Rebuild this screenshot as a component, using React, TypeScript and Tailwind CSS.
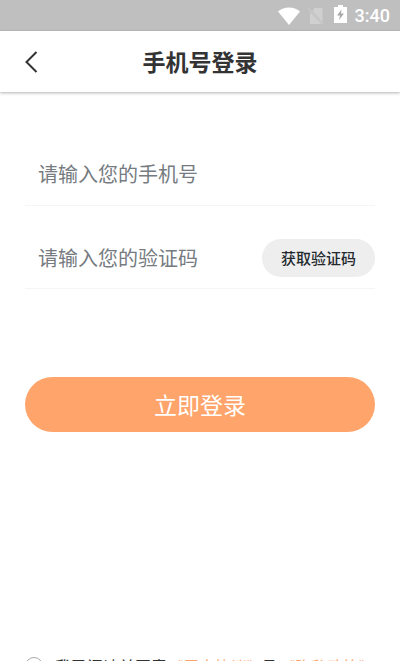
import { FC, useState } from "react";

const StatusBar: FC = () => {
    return (
        <div className="flex h-[31px] shrink-0 items-center justify-end bg-[#bfbfbf] pr-2.5 text-white">
            <svg className="h-[18px] w-[22px]" viewBox="0 0 22 18" fill="currentColor">
                <path d="M0 4.5C6-1 16-1 22 4.5L11 18Z" />
            </svg>
            <svg
                className="ml-2 h-[18px] w-4 text-[#d0d0d0]"
                viewBox="0 0 16 18"
                fill="currentColor"
            >
                <path d="M6.5 1H14.5V15L4.5 4Z" />
                <path d="M2 5L13.500 17H2Z" />
                <path d="M0.500 1.500L15 17" stroke="currentColor" strokeWidth="1" />
            </svg>
            <svg className="mb-1 ml-2.5 h-5 w-[13px]" viewBox="0 0 13 20" fill="currentColor">
                <path d="M4 1H9V3H13V19H0V3H4Z" />
                <path d="M7.500 5.500L3 11.500H6L5 16L10 9.500H7Z" fill="#a8a8a8" />
            </svg>
            <span className="ml-2 font-['Roboto',sans-serif] text-lg leading-6 font-medium">3:40</span>
        </div>
    );
};

const Login: FC = () => {
    const [phone, setPhone] = useState("");
    const [code, setCode] = useState("");

    return (
        <div className="flex h-screen flex-col overflow-hidden bg-white font-['Noto_Sans_CJK_SC',sans-serif] text-[#333]">
            <StatusBar />
            <header className="grid h-[61px] shrink-0 grid-cols-[62px_1fr_62px] items-center shadow-[0_1px_3px_rgba(0,0,0,0.3)]">
                <button type="button" aria-label="返回" className="flex h-full items-center pl-6">
                    <svg
                        className="h-6 w-4"
                        viewBox="0 0 16 24"
                        fill="none"
                        stroke="#333"
                        strokeWidth="2"
                    >
                        <path d="M12.500 2L2.500 12L12.500 22" />
                    </svg>
                </button>
                <h1 className="pb-0.5 text-center text-[23px] leading-8 font-bold">手机号登录</h1>
            </header>

            <main className="px-[25px] pt-[50px]">
                <form onSubmit={(e) => e.preventDefault()}>
                    <div className="flex h-16 items-center border-b border-[#f5f5f5] pl-[13px]">
                        <input
                            type="tel"
                            aria-label="手机号"
                            placeholder="请输入您的手机号"
                            value={phone}
                            onChange={(e) => setPhone(e.target.value)}
                            className="w-full min-w-0 text-xl outline-none placeholder:text-[#757b80]"
                        />
                    </div>
                    <div className="mt-[19px] flex h-16 items-center border-b border-[#f5f5f5] pt-0.5 pl-[13px]">
                        <input
                            type="text"
                            aria-label="验证码"
                            placeholder="请输入您的验证码"
                            value={code}
                            onChange={(e) => setCode(e.target.value)}
                            className="min-w-0 flex-1 text-xl outline-none placeholder:text-[#757b80]"
                        />
                        <button
                            type="button"
                            className="h-[38px] w-[113px] rounded-full bg-[#eee] pt-0.5 text-[15px] font-medium text-[#24292e]"
                        >
                            获取验证码
                        </button>
                    </div>
                    <button
                        type="submit"
                        className="mt-[88px] h-[55px] w-full rounded-full bg-[#ffa46b] text-[23px] text-white"
                    >
                        立即登录
                    </button>
                    <div className="mt-[222px] flex items-center gap-3 text-base whitespace-nowrap">
                        <input
                            id="agree"
                            type="checkbox"
                            className="size-[18px] appearance-none rounded-full border border-[#aaa] checked:bg-[#ffa46b]"
                        />
                        <div>
                            <label htmlFor="agree">我已阅读并同意</label>
                            <a href="#agreement" className="text-[#ffa46b]">
                                《用户协议》
                            </a>
                            及
                            <a href="#privacy" className="text-[#ffa46b]">
                                《隐私政策》
                            </a>
                        </div>
                    </div>
                </form>
            </main>
        </div>
    );
};

export default Login;
